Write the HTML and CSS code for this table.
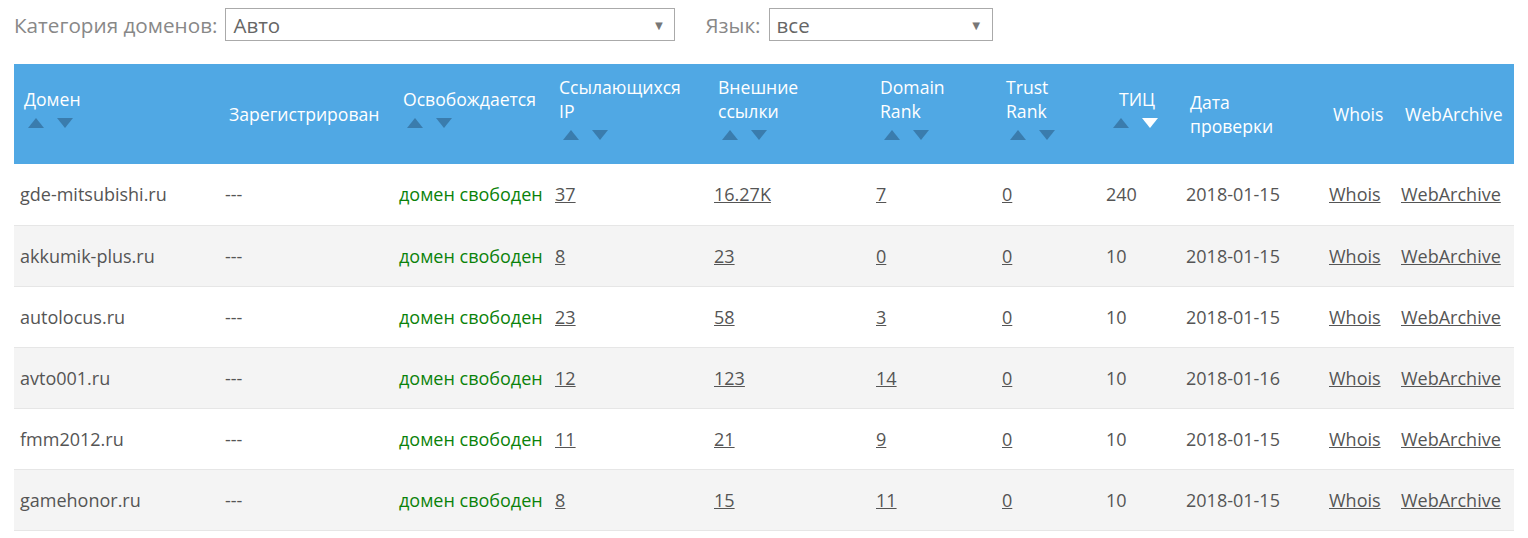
FILE: index.html
```html
<!DOCTYPE html>
<html lang="ru">
<head>
<meta charset="utf-8">
<link rel="stylesheet" href="styles.css">
</head>
<body>
<div class="page">
  <div class="filters">
    <label class="filter">
      <span class="filter-label">Категория доменов:</span>
      <span class="select select-cat"><span>Авто</span><span class="caret">▼</span></span>
    </label>
    <label class="filter">
      <span class="filter-label">Язык:</span>
      <span class="select select-lang"><span>все</span><span class="caret">▼</span></span>
    </label>
  </div>

  <table class="domains">
    <colgroup>
      <col style="width:205px"><col style="width:174px"><col style="width:156px"><col style="width:159px">
      <col style="width:162px"><col style="width:126px"><col style="width:104px"><col style="width:80px">
      <col style="width:143px"><col style="width:72px"><col style="width:119px">
    </colgroup>
    <thead>
      <tr>
        <th><div class="th-title">Домен</div><div class="sort"><span class="up"></span><span class="down"></span></div></th>
        <th><div class="th-title">Зарегистрирован</div></th>
        <th><div class="th-title">Освобождается</div><div class="sort"><span class="up"></span><span class="down"></span></div></th>
        <th><div class="th-title">Ссылающихся<br>IP</div><div class="sort"><span class="up"></span><span class="down"></span></div></th>
        <th><div class="th-title">Внешние<br>ссылки</div><div class="sort"><span class="up"></span><span class="down"></span></div></th>
        <th><div class="th-title">Domain<br>Rank</div><div class="sort"><span class="up"></span><span class="down"></span></div></th>
        <th><div class="th-title">Trust<br>Rank</div><div class="sort"><span class="up"></span><span class="down"></span></div></th>
        <th class="th-tic"><div class="th-title">ТИЦ</div><div class="sort"><span class="up"></span><span class="down active"></span></div></th>
        <th><div class="th-title">Дата<br>проверки</div></th>
        <th><div class="th-title">Whois</div></th>
        <th><div class="th-title">WebArchive</div></th>
      </tr>
    </thead>
    <tbody>
      <tr><td>gde-mitsubishi.ru</td><td>---</td><td class="free">домен свободен</td><td><a href="#">37</a></td><td><a href="#">16.27K</a></td><td><a href="#">7</a></td><td><a href="#">0</a></td><td>240</td><td>2018-01-15</td><td><a href="#">Whois</a></td><td><a href="#">WebArchive</a></td></tr>
      <tr><td>akkumik-plus.ru</td><td>---</td><td class="free">домен свободен</td><td><a href="#">8</a></td><td><a href="#">23</a></td><td><a href="#">0</a></td><td><a href="#">0</a></td><td>10</td><td>2018-01-15</td><td><a href="#">Whois</a></td><td><a href="#">WebArchive</a></td></tr>
      <tr><td>autolocus.ru</td><td>---</td><td class="free">домен свободен</td><td><a href="#">23</a></td><td><a href="#">58</a></td><td><a href="#">3</a></td><td><a href="#">0</a></td><td>10</td><td>2018-01-15</td><td><a href="#">Whois</a></td><td><a href="#">WebArchive</a></td></tr>
      <tr><td>avto001.ru</td><td>---</td><td class="free">домен свободен</td><td><a href="#">12</a></td><td><a href="#">123</a></td><td><a href="#">14</a></td><td><a href="#">0</a></td><td>10</td><td>2018-01-16</td><td><a href="#">Whois</a></td><td><a href="#">WebArchive</a></td></tr>
      <tr><td>fmm2012.ru</td><td>---</td><td class="free">домен свободен</td><td><a href="#">11</a></td><td><a href="#">21</a></td><td><a href="#">9</a></td><td><a href="#">0</a></td><td>10</td><td>2018-01-15</td><td><a href="#">Whois</a></td><td><a href="#">WebArchive</a></td></tr>
      <tr><td>gamehonor.ru</td><td>---</td><td class="free">домен свободен</td><td><a href="#">8</a></td><td><a href="#">15</a></td><td><a href="#">11</a></td><td><a href="#">0</a></td><td>10</td><td>2018-01-15</td><td><a href="#">Whois</a></td><td><a href="#">WebArchive</a></td></tr>
    </tbody>
  </table>
</div>
</body>
</html>
```

FILE: styles.css
```css
* { box-sizing: border-box; }
html, body { margin: 0; padding: 0; background: #fff; }
body {
  font-family: "Open Sans", "Liberation Sans", sans-serif;
  color: #555;
  overflow: hidden;
}
.page { padding: 8px 14px 0 14px; }

.filters {
  display: flex;
  align-items: center;
  gap: 30px;
  height: 33px;
}
.filter { display: flex; align-items: center; gap: 8px; }
.filter-label { font-size: 20.7px; color: #888; }
.select {
  display: flex;
  align-items: center;
  justify-content: space-between;
  height: 33px;
  border: 1px solid #aaa;
  background: #fff;
  padding: 0 9px 0 7px;
  font-size: 20.5px;
  color: #666;
}
.select-cat { width: 450px; }
.select-lang { width: 224px; }
.caret { font-size: 13px; color: #777; }

.domains {
  margin-top: 23px;
  width: 1500px;
  border-collapse: collapse;
  table-layout: fixed;
}
.domains thead tr { background: #50a8e4; height: 100px; }
.domains th {
  color: #fff;
  font-weight: normal;
  font-size: 17.6px;
  line-height: 24px;
  text-align: left;
  vertical-align: middle;
  padding: 0 2px 0 10px;
  white-space: nowrap;
}
.sort { display: flex; gap: 13px; padding: 7px 0 13px 4px; }
.sort span {
  width: 0; height: 0;
  border-left: 8.5px solid transparent;
  border-right: 8.5px solid transparent;
}
.sort .up { border-bottom: 10px solid #3a7cad; }
.sort .down { border-top: 10px solid #3a7cad; }
.sort .down.active { border-top-color: #fff; }
.th-tic .th-title { padding-left: 9px; }
.th-tic .sort { padding-left: 3px; }

.domains td {
  height: 61px;
  font-size: 18px;
  padding: 0 2px 0 6px;
  border-bottom: 1px solid #e6e6e6;
  white-space: nowrap;
}
.domains tbody tr:nth-child(even) { background: #f4f4f4; }
.domains td.free { color: #0a820a; }
.domains a { color: #555; text-decoration: underline; }
```
